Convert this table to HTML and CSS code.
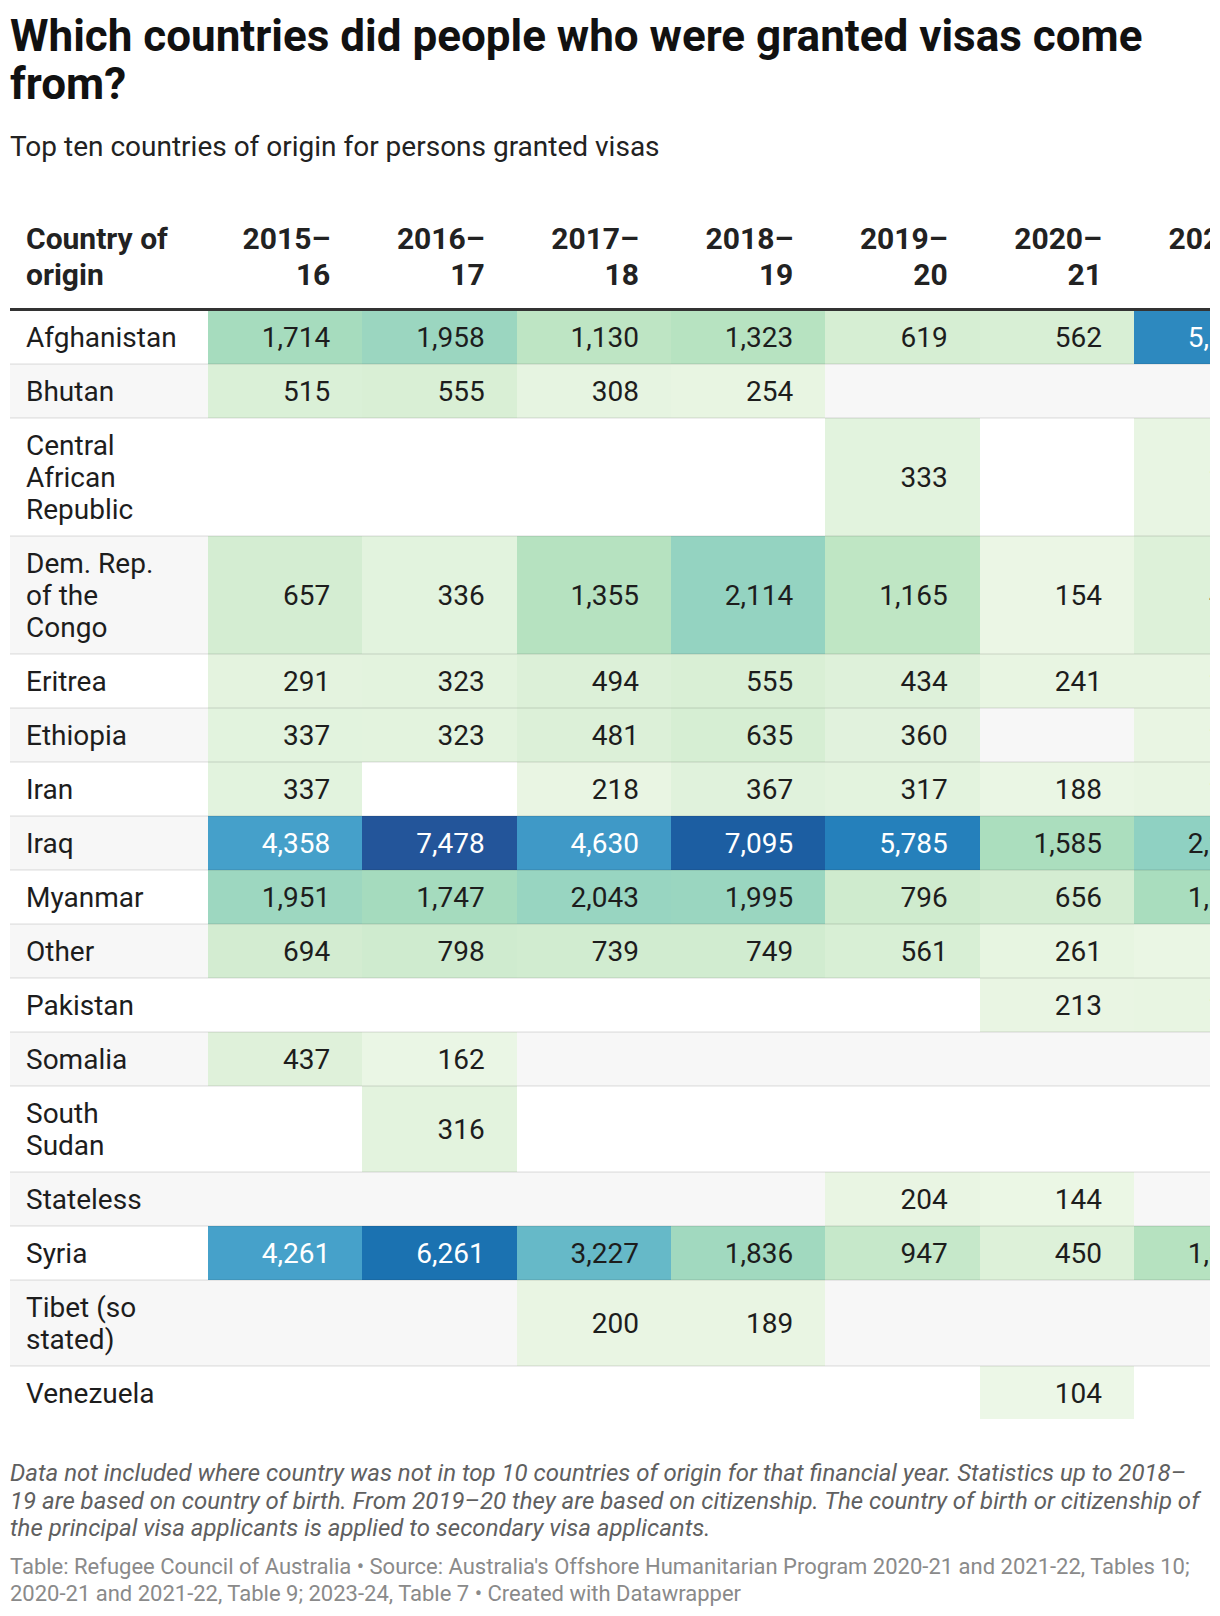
FILE: index.html
```html
<!DOCTYPE html>
<html lang="en">
<head>
<meta charset="utf-8">
<title>Which countries did people who were granted visas come from?</title>
<link rel="stylesheet" href="styles.css">
</head>
<body>
<div class="chart">
  <h1 class="title">Which countries did people who were granted visas come from?</h1>
  <p class="subtitle">Top ten countries of origin for persons granted visas</p>

  <div class="table-wrap">
    <table class="heat">
      <colgroup>
        <col class="col-country">
        <col class="col-year"><col class="col-year"><col class="col-year"><col class="col-year">
        <col class="col-year"><col class="col-year"><col class="col-year">
      </colgroup>
      <thead>
        <tr>
          <th class="th-country">Country of origin</th>
          <th>2015–16</th>
          <th>2016–17</th>
          <th>2017–18</th>
          <th>2018–19</th>
          <th>2019–20</th>
          <th>2020–21</th>
          <th>2021–22</th>
        </tr>
      </thead>
      <tbody>
        <tr>
          <td class="country">Afghanistan</td>
          <td style="background:#a6dcbe">1,714</td>
          <td style="background:#9bd6c0">1,958</td>
          <td style="background:#bee5c4">1,130</td>
          <td style="background:#b7e3c1">1,323</td>
          <td style="background:#d6eed3">619</td>
          <td style="background:#d8efd5">562</td>
          <td class="light" style="background:#2d89bf">5,338</td>
        </tr>
        <tr class="alt">
          <td class="country">Bhutan</td>
          <td style="background:#daf0d7">515</td>
          <td style="background:#d9efd5">555</td>
          <td style="background:#e6f4e1">308</td>
          <td style="background:#e8f5e2">254</td>
          <td></td>
          <td></td>
          <td></td>
        </tr>
        <tr>
          <td class="country">Central African Republic</td>
          <td></td>
          <td></td>
          <td></td>
          <td></td>
          <td style="background:#e2f3de">333</td>
          <td></td>
          <td style="background:#e8f5e3">288</td>
        </tr>
        <tr class="alt">
          <td class="country">Dem. Rep. of the Congo</td>
          <td style="background:#d4edd2">657</td>
          <td style="background:#e2f3de">336</td>
          <td style="background:#b6e2c0">1,355</td>
          <td style="background:#94d3c1">2,114</td>
          <td style="background:#bfe6c4">1,165</td>
          <td style="background:#ebf6e5">154</td>
          <td style="background:#ddf1d9">452</td>
        </tr>
        <tr>
          <td class="country">Eritrea</td>
          <td style="background:#e4f3df">291</td>
          <td style="background:#e3f3de">323</td>
          <td style="background:#dcf0d8">494</td>
          <td style="background:#d9efd5">555</td>
          <td style="background:#def1da">434</td>
          <td style="background:#e8f5e2">241</td>
          <td style="background:#e8f5e2">231</td>
        </tr>
        <tr class="alt">
          <td class="country">Ethiopia</td>
          <td style="background:#e2f3de">337</td>
          <td style="background:#e3f3de">323</td>
          <td style="background:#dcf0d8">481</td>
          <td style="background:#d6eed3">635</td>
          <td style="background:#e1f2dd">360</td>
          <td></td>
          <td style="background:#e9f5e3">219</td>
        </tr>
        <tr>
          <td class="country">Iran</td>
          <td style="background:#e2f3de">337</td>
          <td></td>
          <td style="background:#e9f5e3">218</td>
          <td style="background:#e0f2dc">367</td>
          <td style="background:#e3f3de">317</td>
          <td style="background:#eaf6e4">188</td>
          <td style="background:#e8f5e2">243</td>
        </tr>
        <tr class="alt">
          <td class="country">Iraq</td>
          <td class="light" style="background:#45a0ca">4,358</td>
          <td class="light" style="background:#23559a">7,478</td>
          <td class="light" style="background:#3f99c7">4,630</td>
          <td class="light" style="background:#1c5ea2">7,095</td>
          <td class="light" style="background:#2580bb">5,785</td>
          <td style="background:#abdebe">1,585</td>
          <td style="background:#8fd1c2">2,208</td>
        </tr>
        <tr>
          <td class="country">Myanmar</td>
          <td style="background:#9dd7c0">1,951</td>
          <td style="background:#a5dbbe">1,747</td>
          <td style="background:#98d5c1">2,043</td>
          <td style="background:#9ad6c0">1,995</td>
          <td style="background:#cfebce">796</td>
          <td style="background:#d4edd2">656</td>
          <td style="background:#a9ddbe">1,628</td>
        </tr>
        <tr class="alt">
          <td class="country">Other</td>
          <td style="background:#d3ecd1">694</td>
          <td style="background:#cfebcf">798</td>
          <td style="background:#d1ecd0">739</td>
          <td style="background:#d1ecd0">749</td>
          <td style="background:#d8efd5">561</td>
          <td style="background:#e7f5e1">261</td>
          <td style="background:#eaf6e4">176</td>
        </tr>
        <tr>
          <td class="country">Pakistan</td>
          <td></td>
          <td></td>
          <td></td>
          <td></td>
          <td></td>
          <td style="background:#e9f5e3">213</td>
          <td style="background:#e8f5e2">246</td>
        </tr>
        <tr class="alt">
          <td class="country">Somalia</td>
          <td style="background:#dff1da">437</td>
          <td style="background:#eaf6e5">162</td>
          <td></td>
          <td></td>
          <td></td>
          <td></td>
          <td></td>
        </tr>
        <tr>
          <td class="country">South Sudan</td>
          <td></td>
          <td style="background:#e3f3de">316</td>
          <td></td>
          <td></td>
          <td></td>
          <td></td>
          <td></td>
        </tr>
        <tr class="alt">
          <td class="country">Stateless</td>
          <td></td>
          <td></td>
          <td></td>
          <td></td>
          <td style="background:#e9f5e3">204</td>
          <td style="background:#ebf7e5">144</td>
          <td></td>
        </tr>
        <tr>
          <td class="country">Syria</td>
          <td class="light" style="background:#46a1ca">4,261</td>
          <td class="light" style="background:#1b72b1">6,261</td>
          <td style="background:#66b9c8">3,227</td>
          <td style="background:#a1d9bf">1,836</td>
          <td style="background:#c6e8ca">947</td>
          <td style="background:#ddf1d9">450</td>
          <td style="background:#b6e2c0">1,353</td>
        </tr>
        <tr class="alt">
          <td class="country">Tibet (so stated)</td>
          <td></td>
          <td></td>
          <td style="background:#e9f5e3">200</td>
          <td style="background:#e9f5e3">189</td>
          <td></td>
          <td></td>
          <td></td>
        </tr>
        <tr>
          <td class="country">Venezuela</td>
          <td></td>
          <td></td>
          <td></td>
          <td></td>
          <td></td>
          <td style="background:#ecf7e7">104</td>
          <td></td>
        </tr>
      </tbody>
    </table>
  </div>

  <p class="notes">Data not included where country was not in top 10 countries of origin for that financial year. Statistics up to 2018–19 are based on country of birth. From 2019–20 they are based on citizenship. The country of birth or citizenship of the principal visa applicants is applied to secondary visa applicants.</p>
  <p class="source">Table: Refugee Council of Australia • Source: Australia's Offshore Humanitarian Program 2020-21 and 2021-22, Tables 10; 2020-21 and 2021-22, Table 9; 2023-24, Table 7 • Created with Datawrapper</p>
</div>
</body>
</html>
```

FILE: styles.css
```css
html, body {
  margin: 0;
  padding: 0;
  background: #ffffff;
}

body {
  font-family: Roboto, "Noto Sans", "Liberation Sans", sans-serif;
  color: #222222;
}

.chart {
  padding: 12px 10px 0 10px;
}

.title {
  margin: 0;
  font-size: 44px;
  line-height: 48.4px;
  font-weight: 700;
  color: #111111;
}

.subtitle {
  margin: 21.5px 0 0 0;
  font-size: 28px;
  line-height: 33.6px;
  font-weight: 400;
  color: #222222;
}

.table-wrap {
  margin-top: 57.5px;
  width: 1200px;
  overflow: hidden;
}

.heat {
  table-layout: fixed;
  border-collapse: collapse;
  border-spacing: 0;
  width: 1278.3px;
}

.col-country {
  width: 198px;
}

.col-year {
  width: 154.33px;
}

.heat th {
  font-size: 30px;
  line-height: 36px;
  font-weight: 700;
  color: #222222;
  text-align: right;
  vertical-align: bottom;
  padding: 0 32px 15px 16px;
  border-bottom: 3px solid #333333;
}

.heat th.th-country {
  text-align: left;
  padding-right: 28px;
}

.heat td {
  font-size: 28px;
  line-height: 32px;
  font-weight: 400;
  color: #1d1d1d;
  text-align: right;
  vertical-align: middle;
  padding: 11px 32px 9px 10px;
  border-top: 2px solid rgba(0, 0, 0, 0.065);
  white-space: nowrap;
}

.heat tbody tr:first-child td {
  border-top: 0;
}

.heat td.country {
  text-align: left;
  padding: 11px 28px 9px 16px;
  white-space: normal;
}

.heat tr.alt {
  background: #f7f7f7;
}

.heat td.light {
  color: #ffffff;
}

.notes {
  margin: 41px 0 0 0;
  font-size: 24px;
  line-height: 27.5px;
  font-style: italic;
  color: #606060;
}

.source {
  margin: 11.4px 0 0 0;
  font-size: 22px;
  line-height: 26.5px;
  color: #8a8a8a;
}
```
